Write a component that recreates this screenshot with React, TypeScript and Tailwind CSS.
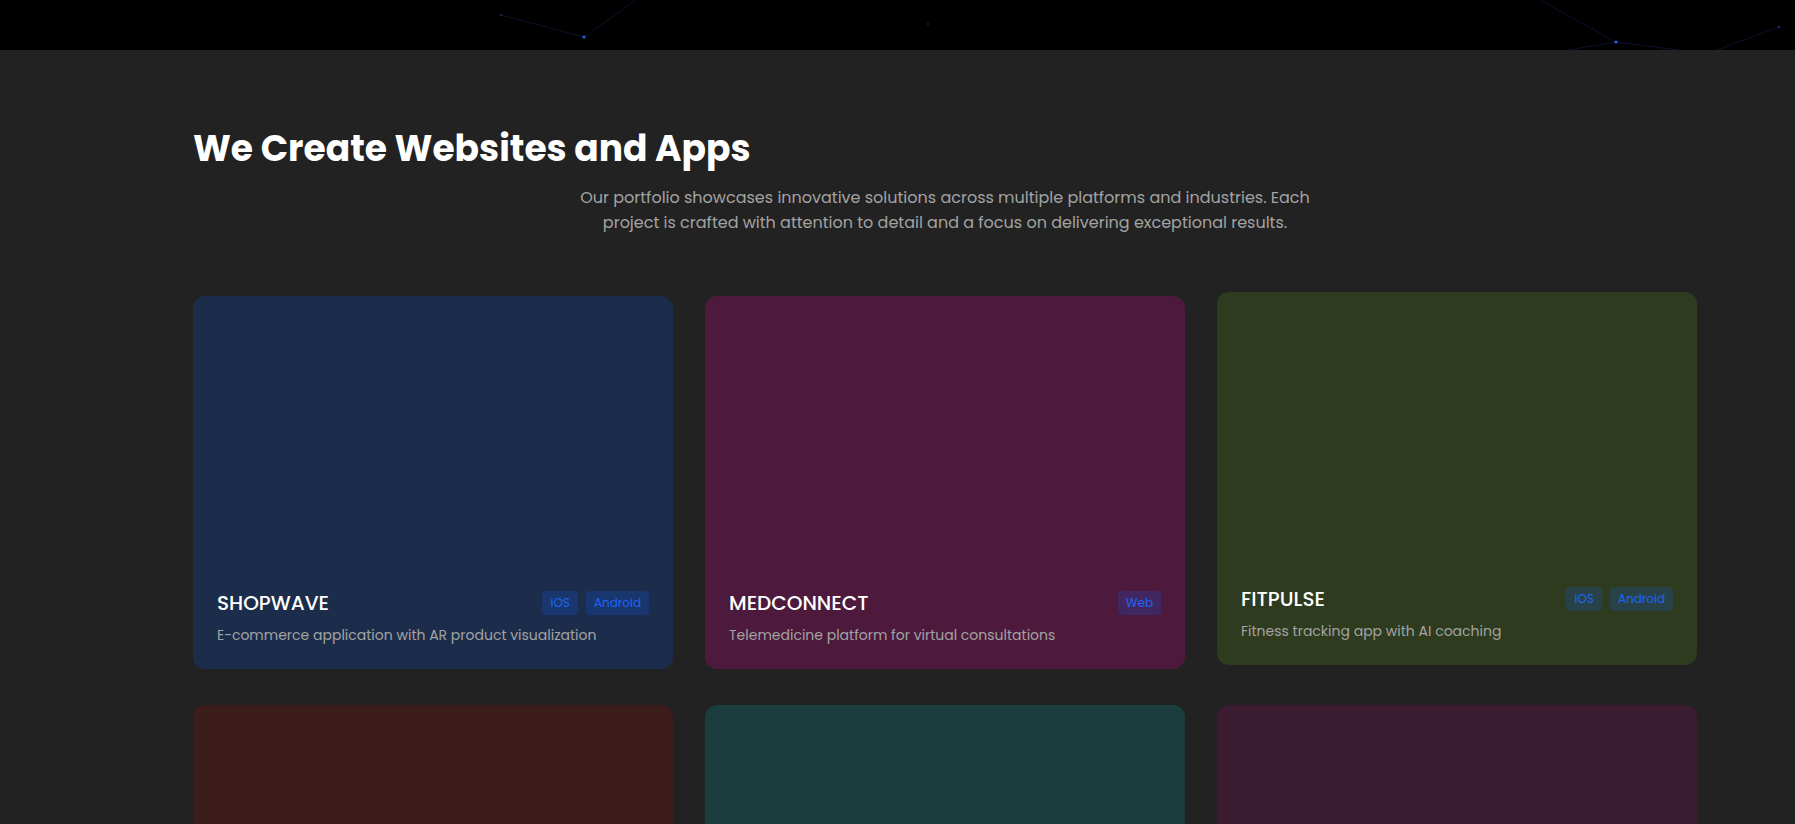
const projects = [
  {
    name: "SHOPWAVE",
    description: "E-commerce application with AR product visualization",
    tags: ["iOS", "Android"],
    color: "bg-[#1b2d4b]",
  },
  {
    name: "MEDCONNECT",
    description: "Telemedicine platform for virtual consultations",
    tags: ["Web"],
    color: "bg-[#4d1a3d]",
  },
  {
    name: "FITPULSE",
    description: "Fitness tracking app with AI coaching",
    tags: ["iOS", "Android"],
    color: "bg-[#2e3b1f]",
    lifted: true,
  },
  {
    name: "CRIMSONPAY",
    description: "Fintech wallet with instant peer payments",
    tags: ["Web"],
    color: "bg-[#3d1c1c]",
  },
  {
    name: "TIDEFLOW",
    description: "Workflow automation dashboard for teams",
    tags: ["Web"],
    color: "bg-[#1c3d3e]",
  },
  {
    name: "AURALINK",
    description: "Social audio rooms for creators",
    tags: ["iOS", "Android"],
    color: "bg-[#3b1b30]",
  },
];

function Particles() {
  return (
    <svg className="w-full h-full" viewBox="0 0 1795 50" preserveAspectRatio="none">
      <g stroke="#1e3a8a" strokeOpacity={0.3} strokeWidth={1}>
        <line x1={501} y1={15} x2={584} y2={37} />
        <line x1={584} y1={37} x2={636} y2={0} />
        <line x1={1540} y1={0} x2={1616} y2={42} />
        <line x1={1616} y1={42} x2={1568} y2={50} />
        <line x1={1616} y1={42} x2={1677} y2={50} />
        <line x1={1779} y1={27} x2={1717} y2={50} />
      </g>
      <g fill="#2563eb">
        <circle cx={501} cy={15} r={1} opacity={0.5} />
        <circle cx={584} cy={37} r={1.6} />
        <circle cx={928} cy={24} r={1} opacity={0.4} />
        <circle cx={1616} cy={42} r={1.6} />
        <circle cx={1779} cy={27} r={1} opacity={0.6} />
      </g>
    </svg>
  );
}

export default function App() {
  return (
    <div
      className="min-h-screen bg-[#222222] text-white overflow-hidden"
      style={{ fontFamily: "Poppins, 'Open Sans', 'Noto Sans', sans-serif" }}
    >
      {/* top band */}
      <div className="h-[50px] bg-black">
        <Particles />
      </div>

      <section className="pt-[76px]">
        <div className="ml-[193px] w-[1504px]">
          <h2 className="text-[36px] leading-[46px] font-bold">
            We Create Websites and Apps
          </h2>
          <p className="mx-auto mt-[13px] max-w-[760px] text-center text-[16px] leading-[25px] text-[#a3a3a3]">
            Our portfolio showcases innovative solutions across multiple platforms and industries. Each
            project is crafted with attention to detail and a focus on delivering exceptional results.
          </p>

          <div className="mt-[61px] grid grid-cols-3 gap-x-[32px] gap-y-[36px]">
            {projects.map((p) => (
              <div
                key={p.name}
                className={`${p.color} h-[373px] rounded-xl p-6 flex flex-col justify-end ${
                  p.lifted ? "-translate-y-[4px]" : ""
                }`}
              >
                <div className="flex items-center justify-between">
                  <h3 className="text-[20px] leading-[28px] font-medium">{p.name}</h3>
                  <div className="flex gap-2">
                    {p.tags.map((t) => (
                      <span
                        key={t}
                        className="h-[24px] px-2 flex items-center rounded bg-blue-600/20 text-[12px] text-[#1d64f5]"
                      >
                        {t}
                      </span>
                    ))}
                  </div>
                </div>
                <p className="mt-[8px] text-[14px] leading-[20px] text-[#a3a3a3]">{p.description}</p>
              </div>
            ))}
          </div>
        </div>
      </section>
    </div>
  );
}
